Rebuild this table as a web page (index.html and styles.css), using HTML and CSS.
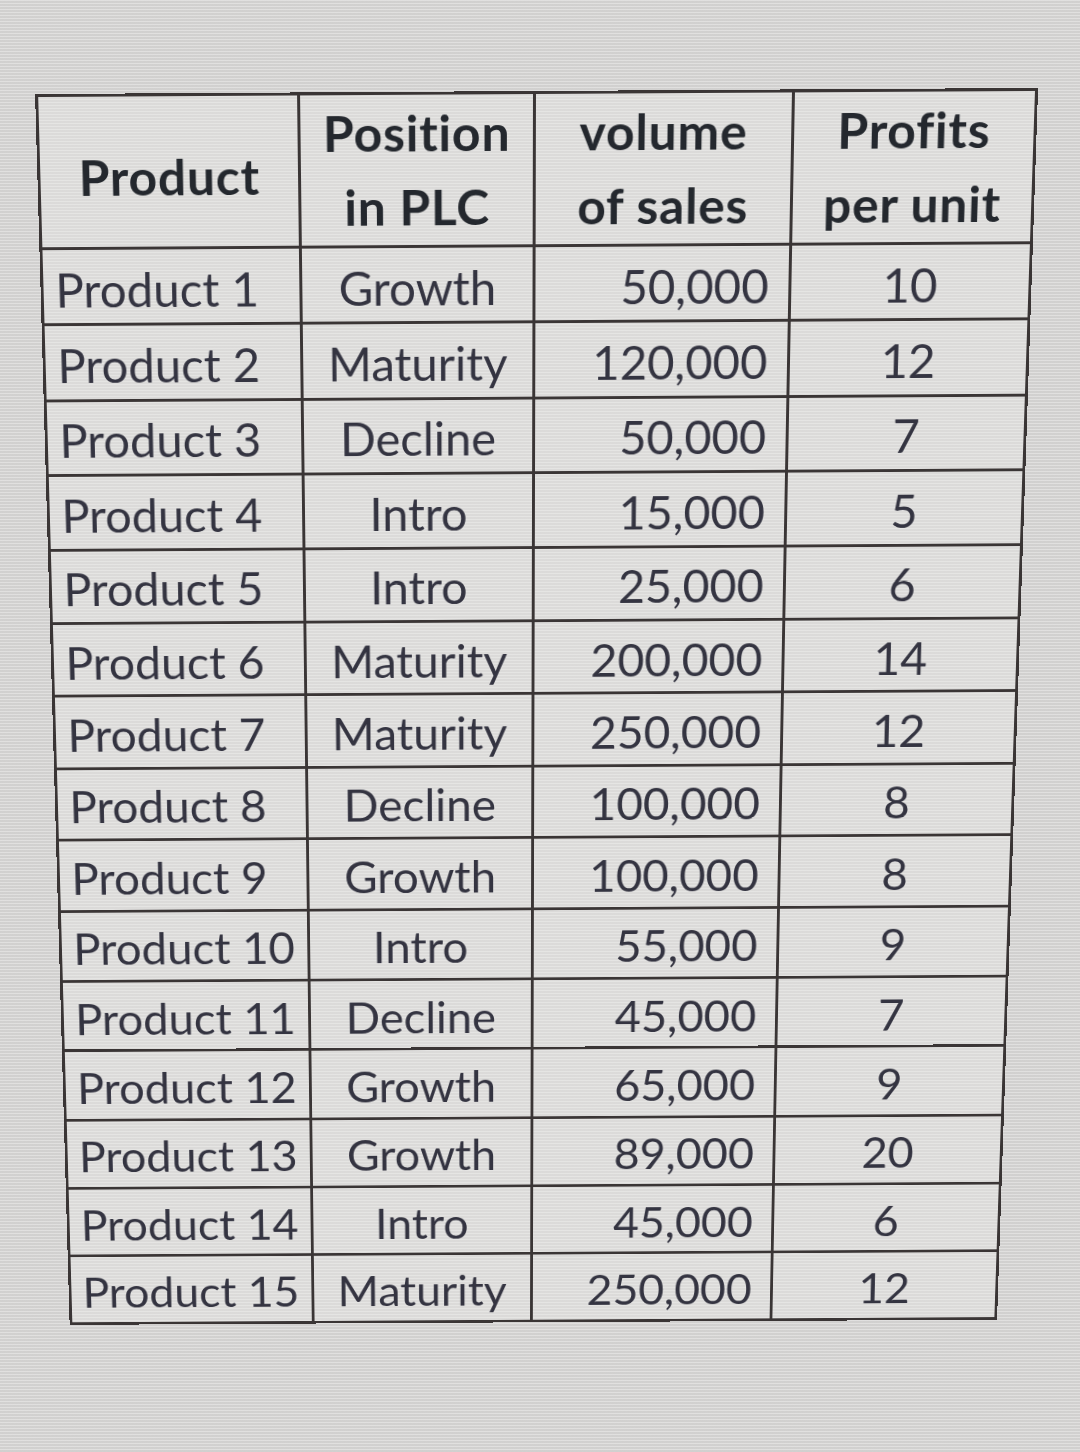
FILE: index.html
```html
<!DOCTYPE html>
<html>
<head>
<meta charset="utf-8">
<link rel="stylesheet" href="styles.css">
</head>
<body>
<div class="screen">
  <table class="sheet">
    <colgroup>
      <col class="c1"><col class="c2"><col class="c3"><col class="c4">
    </colgroup>
    <thead>
      <tr>
        <th class="single">Product</th>
        <th>Position<br>in PLC</th>
        <th>volume<br>of sales</th>
        <th>Profits<br>per unit</th>
      </tr>
    </thead>
    <tbody>
      <tr><td class="name">Product 1</td><td class="stage">Growth</td><td class="vol">50,000</td><td class="profit">10</td></tr>
      <tr><td class="name">Product 2</td><td class="stage">Maturity</td><td class="vol">120,000</td><td class="profit">12</td></tr>
      <tr><td class="name">Product 3</td><td class="stage">Decline</td><td class="vol">50,000</td><td class="profit">7</td></tr>
      <tr><td class="name">Product 4</td><td class="stage">Intro</td><td class="vol">15,000</td><td class="profit">5</td></tr>
      <tr><td class="name">Product 5</td><td class="stage">Intro</td><td class="vol">25,000</td><td class="profit">6</td></tr>
      <tr><td class="name">Product 6</td><td class="stage">Maturity</td><td class="vol">200,000</td><td class="profit">14</td></tr>
      <tr><td class="name">Product 7</td><td class="stage">Maturity</td><td class="vol">250,000</td><td class="profit">12</td></tr>
      <tr><td class="name">Product 8</td><td class="stage">Decline</td><td class="vol">100,000</td><td class="profit">8</td></tr>
      <tr><td class="name">Product 9</td><td class="stage">Growth</td><td class="vol">100,000</td><td class="profit">8</td></tr>
      <tr><td class="name">Product 10</td><td class="stage">Intro</td><td class="vol">55,000</td><td class="profit">9</td></tr>
      <tr><td class="name">Product 11</td><td class="stage">Decline</td><td class="vol">45,000</td><td class="profit">7</td></tr>
      <tr><td class="name">Product 12</td><td class="stage">Growth</td><td class="vol">65,000</td><td class="profit">9</td></tr>
      <tr><td class="name">Product 13</td><td class="stage">Growth</td><td class="vol">89,000</td><td class="profit">20</td></tr>
      <tr><td class="name">Product 14</td><td class="stage">Intro</td><td class="vol">45,000</td><td class="profit">6</td></tr>
      <tr><td class="name">Product 15</td><td class="stage">Maturity</td><td class="vol">250,000</td><td class="profit">12</td></tr>
    </tbody>
  </table>
</div>
</body>
</html>
```

FILE: styles.css
```css
html, body {
  margin: 0;
  padding: 0;
}
body {
  width: 1080px;
  height: 1452px;
  overflow: hidden;
  background-color: #d9d8d7;
  background-image: repeating-linear-gradient(to bottom, rgba(255,255,255,0.2) 0px, rgba(255,255,255,0.2) 1px, rgba(0,0,0,0.035) 1px, rgba(0,0,0,0.035) 3px);
  font-family: Lato, "Open Sans", "Liberation Sans", sans-serif;
}
.screen {
  padding: 91px 0 0 35px;
}
.sheet {
  border-collapse: collapse;
  table-layout: fixed;
  width: 1000px;
  border: 3px solid #3a3535;
  color: #343441;
  transform-origin: 50% 0;
  transform: perspective(1000px) rotateX(-3.5deg) rotate(-0.35deg) skewX(-0.5deg);
}
.c1 { width: 262px; }
.c2 { width: 236px; }
.c3 { width: 259px; }
.c4 { width: 243px; }
.sheet th, .sheet td {
  border: 3px solid #3a3535;
  padding: 0;
  background: rgba(238,237,236,0.35);
  white-space: nowrap;
  overflow: hidden;
}
.sheet th {
  height: 142px;
  font-weight: 700;
  font-size: 50px;
  line-height: 75px;
  color: #24282e;
  text-align: center;
  vertical-align: middle;
  letter-spacing: 0.8px;
}
.sheet th.single {
  padding-top: 10px;
}
.sheet td {
  height: 69.4px;
  font-size: 48px;
  line-height: 54px;
  vertical-align: middle;
  padding-top: 6px;
}
.name {
  text-align: left;
  padding-left: 12px !important;
}
.stage {
  text-align: center;
}
.vol {
  text-align: right;
  padding-right: 20px !important;
}
.profit {
  text-align: center;
}
```
